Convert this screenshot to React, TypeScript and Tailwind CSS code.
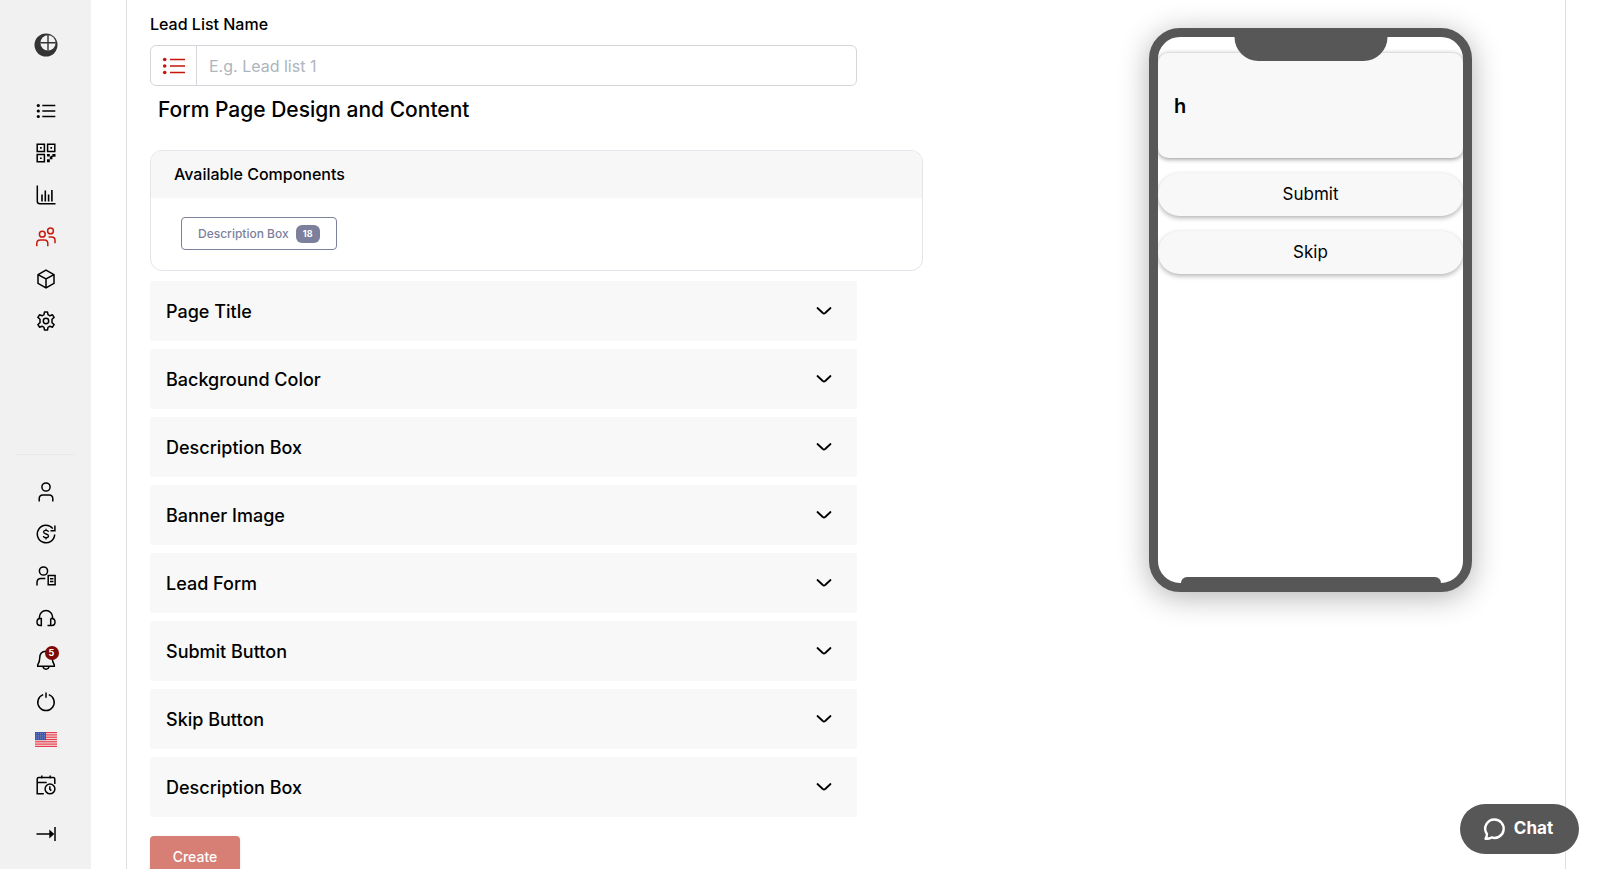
import React from "react";

const FlagIcon: React.FC = () => (
  <svg width="22" height="15" viewBox="0 0 22 15">
    <rect width="22" height="15" fill="#f8dfe0" />
    {[0, 2.3, 4.6, 6.9, 9.2, 11.5, 13.8].map((y) => (
      <rect key={y} y={y} width="22" height="1.2" fill="#e0404f" />
    ))}
    <rect width="11" height="8.1" fill="#3c55a8" />
    {[1.4, 3.2, 5, 6.8].map((y) =>
      [1.4, 3.4, 5.4, 7.4, 9.4].map((x) => (
        <circle key={`${x}-${y}`} cx={x} cy={y} r="0.4" fill="#c5cdea" />
      ))
    )}
  </svg>
);

const Icon: React.FC<{ children: React.ReactNode }> = ({ children }) => (
  <svg
    width="20"
    height="20"
    viewBox="0 0 20 20"
    fill="none"
    stroke="currentColor"
    strokeWidth="1.5"
  >
    {children}
  </svg>
);

const topItems = [
  {
    label: "Lists",
    icon: (
      <Icon>
        <path d="M6.3 4.5h13M6.3 10h13M6.3 15.5h13" strokeWidth="1.4" />
        <g fill="currentColor" stroke="none">
          <circle cx="2.3" cy="4.5" r="1.6" />
          <circle cx="2.3" cy="10" r="1.6" />
          <circle cx="2.3" cy="15.5" r="1.6" />
        </g>
      </Icon>
    ),
  },
  {
    label: "QR codes",
    icon: (
      <Icon>
        <path d="M1.2 1.2h7.2v7.2H1.2zM11.6 1.2h7.2v7.2h-7.2zM1.2 11.6h7.2v7.2H1.2z" />
        <path
          d="M4 4h1.7v1.7H4zM14.4 4h1.7v1.7h-1.7zM4 14.4h1.7v1.7H4zM11 11h2.8v2.5H11zM16.4 11h3.1v2.8h-3.1zM13.8 13.5h2.6v2.8h-2.6zM11 16.3h2.8v3H11zM14.8 12.7h1.8v1.2h-1.8z"
          fill="currentColor"
          stroke="none"
        />
      </Icon>
    ),
  },
  {
    label: "Statistics",
    icon: (
      <Icon>
        <path d="M1.3.5v15.7c0 1.7.8 2.5 2.5 2.5h15.7" />
        <path d="M6 9.5v7M9.3 5.5v11M12.6 9.5v7M15.9 5v11.5" strokeWidth="1.6" />
      </Icon>
    ),
  },
  {
    label: "Leads",
    active: true,
    icon: (
      <Icon>
        <circle cx="6.3" cy="7.2" r="2.9" />
        <circle cx="14.5" cy="3.9" r="2.9" />
        <path d="M.8 19.3v-2.8c0-2 1.3-3.6 3.4-3.6h4.2c2.1 0 3.4 1.6 3.4 3.6v2.8M12.6 9.9h3c2 0 3.4 1.4 3.4 3.4v3" />
      </Icon>
    ),
  },
  {
    label: "Products",
    icon: (
      <Icon>
        <path d="M10 1.2l8 4.4v8.8l-8 4.4-8-4.4V5.6zM2 5.6l8 4.4 8-4.4M10 10v8.8" />
      </Icon>
    ),
  },
  {
    label: "Settings",
    icon: (
      <Icon>
        <circle cx="10" cy="10" r="2.7" />
        <path
          d="M8.5 1h3l.5 2.7 1.9 1.1 2.6-1 1.6 2.6-2.1 1.9v3.4l2.1 1.9-1.6 2.6-2.6-1-1.9 1.1-.5 2.7h-3L8 16.3l-1.9-1.1-2.6 1-1.6-2.6L4 11.7V8.3L1.9 6.4l1.6-2.6 2.6 1L8 3.7z"
          strokeLinejoin="round"
        />
      </Icon>
    ),
  },
];

const bottomItems = [
  {
    label: "Profile",
    size: "h-[42px]",
    icon: (
      <Icon>
        <circle cx="10" cy="5" r="4.1" />
        <path d="M3.2 19.5v-2.7c0-2.2 1.5-3.8 3.7-3.8h6.2c2.2 0 3.7 1.6 3.7 3.8v2.7" />
      </Icon>
    ),
  },
  {
    label: "Billing",
    size: "h-[42px]",
    icon: (
      <Icon>
        <path d="M18.7 10.5A8.7 8.7 0 1 1 16.8 4.6" />
        <path d="M18.9 1.6v5.2h-4.4" />
        <path
          d="M12.5 8c-.2-1.100-1.100-1.700-2.500-1.700S7.600 7 7.600 8.100c0 2.600 4.900 1.200 4.900 3.800 0 1.100-1 1.800-2.500 1.800s-2.500-.6-2.600-1.700M10 4.700v1.600M10 13.700v1.700"
          strokeWidth="1.3"
        />
      </Icon>
    ),
  },
  {
    label: "Accounts",
    size: "h-[42px]",
    icon: (
      <Icon>
        <circle cx="7.5" cy="5" r="4.1" />
        <path d="M1 19.500v-2.900C1 14 2.600 12.400 5 12.400h4.300" />
        <path d="M12.200 9.600h6.900v9.200h-6.900zM14 12.700h3.400M14 15.500h3.400" />
      </Icon>
    ),
  },
  {
    label: "Support",
    size: "h-[42px]",
    icon: (
      <Icon>
        <path d="M3.4 10.500V9.200a6.600 6.600 0 0 1 13.200 0v1.300M5.300 17.500H4.200C2 17.500 1 16 1 14s1-3.500 3.200-3.500h1.100zM14.700 10.500h1.100c2.200 0 3.200 1.500 3.200 3.500s-1 3.500-3.200 3.500h-4.300M14.700 10.500v7" />
      </Icon>
    ),
  },
  {
    label: "Notifications",
    size: "h-[42px]",
    badge: 5,
    icon: (
      <Icon>
        <path d="M10 1.2c-4.5 0-6.3 3.3-6.3 7 0 3.5-.8 4.8-2 6.8v1.2h16.600V15c-1.200-2-2-3.300-2-6.800 0-3.700-1.800-7-6.300-7zM7 16.500c.3 1.800 1.400 2.700 3 2.700s2.700-.9 3-2.700" />
      </Icon>
    ),
  },
  {
    label: "Log out",
    size: "h-[42px]",
    icon: (
      <Icon>
        <path d="M7.2 2.6a8.2 8.2 0 1 0 5.6 0M10 .5v5.3" />
      </Icon>
    ),
  },
  { label: "Language", size: "h-8", icon: <FlagIcon /> },
  {
    label: "Schedule",
    size: "h-[59px]",
    icon: (
      <Icon>
        <path d="M7.8 18.8H1.2V4c0-1 .6-1.600 1.600-1.600h14.400c1 0 1.600.6 1.600 1.600v5M1.200 7.600h9.500M5.800.5v3M14.200.5v3" />
        <circle cx="14" cy="13.9" r="4.9" />
        <path d="M13.8 11.3v2.8l1.5 1.500" />
      </Icon>
    ),
  },
  {
    label: "Expand menu",
    size: "h-10",
    icon: (
      <Icon>
        <path d="M.5 10h15M19 3v14" />
        <path d="M13.300 5.500l5 4.500-5 4.500z" fill="currentColor" stroke="none" />
      </Icon>
    ),
  },
];

const sections = [
  "Page Title",
  "Background Color",
  "Description Box",
  "Banner Image",
  "Lead Form",
  "Submit Button",
  "Skip Button",
  "Description Box",
];

const Sidebar: React.FC = () => (
  <aside className="flex w-[91px] shrink-0 flex-col bg-[#f1f1f1] text-black">
    <a href="#" aria-label="Home" className="flex h-[90px] items-center justify-center">
      <svg width="24" height="24" viewBox="0 0 24 24">
        <circle cx="12" cy="12" r="11.5" fill="#333" />
        <circle cx="14" cy="9.8" r="7.6" fill="#f1f1f1" />
        <path d="M14 2v15.5M6.3 9.8h15.5" stroke="#333" strokeWidth="1.4" />
      </svg>
    </a>
    <nav className="flex flex-col">
      {topItems.map((item) => (
        <a
          key={item.label}
          href="#"
          aria-label={item.label}
          className={`flex h-[42px] items-center justify-center ${item.active ? "text-[#c81a0c]" : ""}`}
        >
          {item.icon}
        </a>
      ))}
    </nav>
    <nav className="mt-auto mb-[15px] flex flex-col">
      <hr className="mx-4 mb-4 border-[#e9e9e9]" />
      {bottomItems.map((item) => (
        <button
          key={item.label}
          aria-label={item.label}
          className={`flex items-center justify-center ${item.size}`}
        >
          <span className="relative">
            {item.icon}
            {item.badge && (
              <span className="absolute -top-1 left-[9px] flex size-3.5 items-center justify-center rounded-full bg-[#7d0a05] text-[9px] font-bold text-white">
                {item.badge}
              </span>
            )}
          </span>
        </button>
      ))}
    </nav>
  </aside>
);

const LeadListField: React.FC = () => (
  <div className="w-[91.4%]">
    <label htmlFor="lead-list" className="block text-[16px] leading-6 font-medium">
      Lead List Name
    </label>
    <div className="mt-[9px] flex h-[41px] rounded-md border border-[#d3d6da]">
      <span className="flex w-[46px] items-center justify-center border-r border-[#d3d6da] text-[#c4160a]">
        <svg width="24" height="20" viewBox="0 0 24 20">
          <path d="M8 3.500h15M8 10h15M8 16.500h15" stroke="currentColor" strokeWidth="1.5" />
          <g fill="currentColor">
            <circle cx="2.7" cy="3.5" r="1.8" />
            <circle cx="2.7" cy="10" r="1.8" />
            <circle cx="2.7" cy="16.5" r="1.8" />
          </g>
        </svg>
      </span>
      <input
        id="lead-list"
        type="text"
        placeholder="E.g. Lead list 1"
        className="min-w-0 flex-1 px-3 text-[16px] outline-none placeholder:text-[#adb5bd]"
      />
    </div>
  </div>
);

const AvailableComponents: React.FC = () => (
  <section className="mt-[25px] overflow-hidden rounded-xl border border-[#e2e5ea]">
    <h3 className="bg-[#f7f7f7] px-[23px] pt-[11px] pb-3 text-[16px] leading-6 font-medium">
      Available Components
    </h3>
    <div className="px-[30px] pt-[19px] pb-5">
      <button className="flex h-[33px] items-center gap-[7px] rounded border border-[#7c809c] px-4 text-[12px] font-medium text-[#7c809c]">
        Description Box
        <span className="flex h-[18px] w-6 items-center justify-center rounded-md bg-[#7c809c] text-[9px] font-bold text-white">
          18
        </span>
      </button>
    </div>
  </section>
);

const Accordion: React.FC = () => (
  <div className="mt-[10px] flex w-[91.4%] flex-col gap-2">
    {sections.map((title, index) => (
      <button
        key={index}
        className="flex h-[60px] items-center justify-between rounded-[2px] bg-[#f8f8f8] pr-[25px] pl-4 text-[18px] font-medium"
      >
        {title}
        <svg width="16" height="16" viewBox="0 0 16 16" fill="none">
          <path
            d="M1.500 5l5.300 5c.8.7 1.600.7 2.400 0l5.300-5"
            stroke="#000"
            strokeWidth="1.8"
            strokeLinecap="round"
          />
        </svg>
      </button>
    ))}
  </div>
);

const PhonePreview: React.FC = () => (
  <div className="relative mt-7 h-[564px] w-[323px] overflow-hidden rounded-[31px] border-[9px] border-[#575757] bg-white shadow-[0_5px_30px_rgba(0,0,0,0.3)]">
    <div className="flex flex-col gap-[15px] pt-4">
      <div className="flex h-[105px] items-center rounded-[10px] bg-[#f8f8f8] px-4 text-[20px] font-semibold shadow-[0_1px_5px_rgba(0,0,0,0.45)]">
        h
      </div>
      <button className="h-[43px] rounded-full bg-[#f8f8f8] text-[17px] shadow-[0_2px_5px_rgba(0,0,0,0.3)]">
        Submit
      </button>
      <button className="h-[43px] rounded-full bg-[#f8f8f8] text-[17px] shadow-[0_2px_5px_rgba(0,0,0,0.3)]">
        Skip
      </button>
    </div>
    <div className="absolute top-0 left-1/2 h-6 w-[153px] -translate-x-1/2 rounded-b-[26px] bg-[#575757]" />
    <div className="absolute bottom-0 left-1/2 h-[6px] w-[260px] -translate-x-1/2 rounded-t-[10px] bg-[#575757]" />
  </div>
);

export default function App() {
  return (
    <div className="flex h-screen overflow-hidden bg-white font-[Inter,sans-serif] text-black">
      <Sidebar />
      <main className="flex min-w-0 flex-1 pr-[34px] pl-[35px]">
        <div className="flex flex-1 items-start justify-between border-x border-[#dcdfe2] pr-[93px] pl-[23px]">
          <form className="w-[58.5%] pt-3">
            <LeadListField />
            <h2 className="mt-[9px] ml-2 text-[21px] leading-[30px] font-medium">
              Form Page Design and Content
            </h2>
            <AvailableComponents />
            <Accordion />
            <button
              type="button"
              className="mt-[19px] h-[41px] w-[90px] rounded bg-[#d77e75] text-[14px] font-medium text-white shadow-sm"
            >
              Create
            </button>
          </form>
          <PhonePreview />
        </div>
      </main>
      <button className="fixed right-[21px] bottom-[15px] flex h-[50px] w-[119px] items-center justify-center gap-2 rounded-full bg-[#575757] pr-1 text-[17px] font-bold text-white">
        <svg width="24" height="24" viewBox="0 0 24 24" fill="none">
          <path
            d="M12.5 2.500a9.200 9.200 0 1 1-3 17.900c-1.600 1-3.600 1.500-6 1.300 1-1.200 1.500-2.400 1.400-4.700A9.200 9.200 0 0 1 12.500 2.500z"
            stroke="#fff"
            strokeWidth="2.4"
            strokeLinejoin="round"
          />
        </svg>
        Chat
      </button>
    </div>
  );
}
